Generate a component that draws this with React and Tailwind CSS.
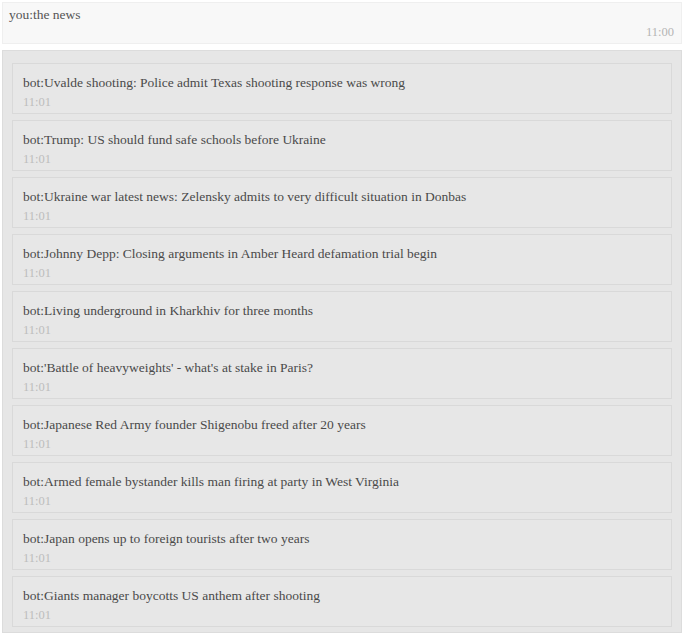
import React from 'react';

const headlines = [
  'Uvalde shooting: Police admit Texas shooting response was wrong',
  'Trump: US should fund safe schools before Ukraine',
  'Ukraine war latest news: Zelensky admits to very difficult situation in Donbas',
  'Johnny Depp: Closing arguments in Amber Heard defamation trial begin',
  'Living underground in Kharkhiv for three months',
  "'Battle of heavyweights' - what's at stake in Paris?",
  'Japanese Red Army founder Shigenobu freed after 20 years',
  'Armed female bystander kills man firing at party in West Virginia',
  'Japan opens up to foreign tourists after two years',
  'Giants manager boycotts US anthem after shooting',
];

const App = () => {
  return (
    <div className="w-[684px] h-[636px] bg-white px-[2px] pt-[2px] font-['Liberation_Serif',serif]">
      <div className="h-[42px] bg-[#f8f8f8] border border-[#efefef] px-[6px] pt-[4px]">
        <p className="text-[13.5px] leading-[15px] text-[#555]">you:the news</p>
        <p className="text-right text-[12.5px] leading-[14px] text-[#b5b5b5] mt-[3px] pr-[1px]">11:00</p>
      </div>
      <div className="mt-[6px] h-[583px] bg-[#e6e6e6] border border-[#dcdcdc] px-[9px] pt-[12px] flex flex-col gap-[6px]">
        {headlines.map((h, i) => (
          <div
            key={i}
            className="h-[51px] bg-[#e7e7e7] border border-[#d9d9d9] px-[10px] pt-[11px]"
          >
            <p className="text-[13.5px] leading-[16px] text-[#4a4a4a]">bot:{h}</p>
            <p className="text-[12.5px] leading-[14px] text-[#bdbdbd] mt-[4px]">11:01</p>
          </div>
        ))}
      </div>
    </div>
  );
};

export default App;
